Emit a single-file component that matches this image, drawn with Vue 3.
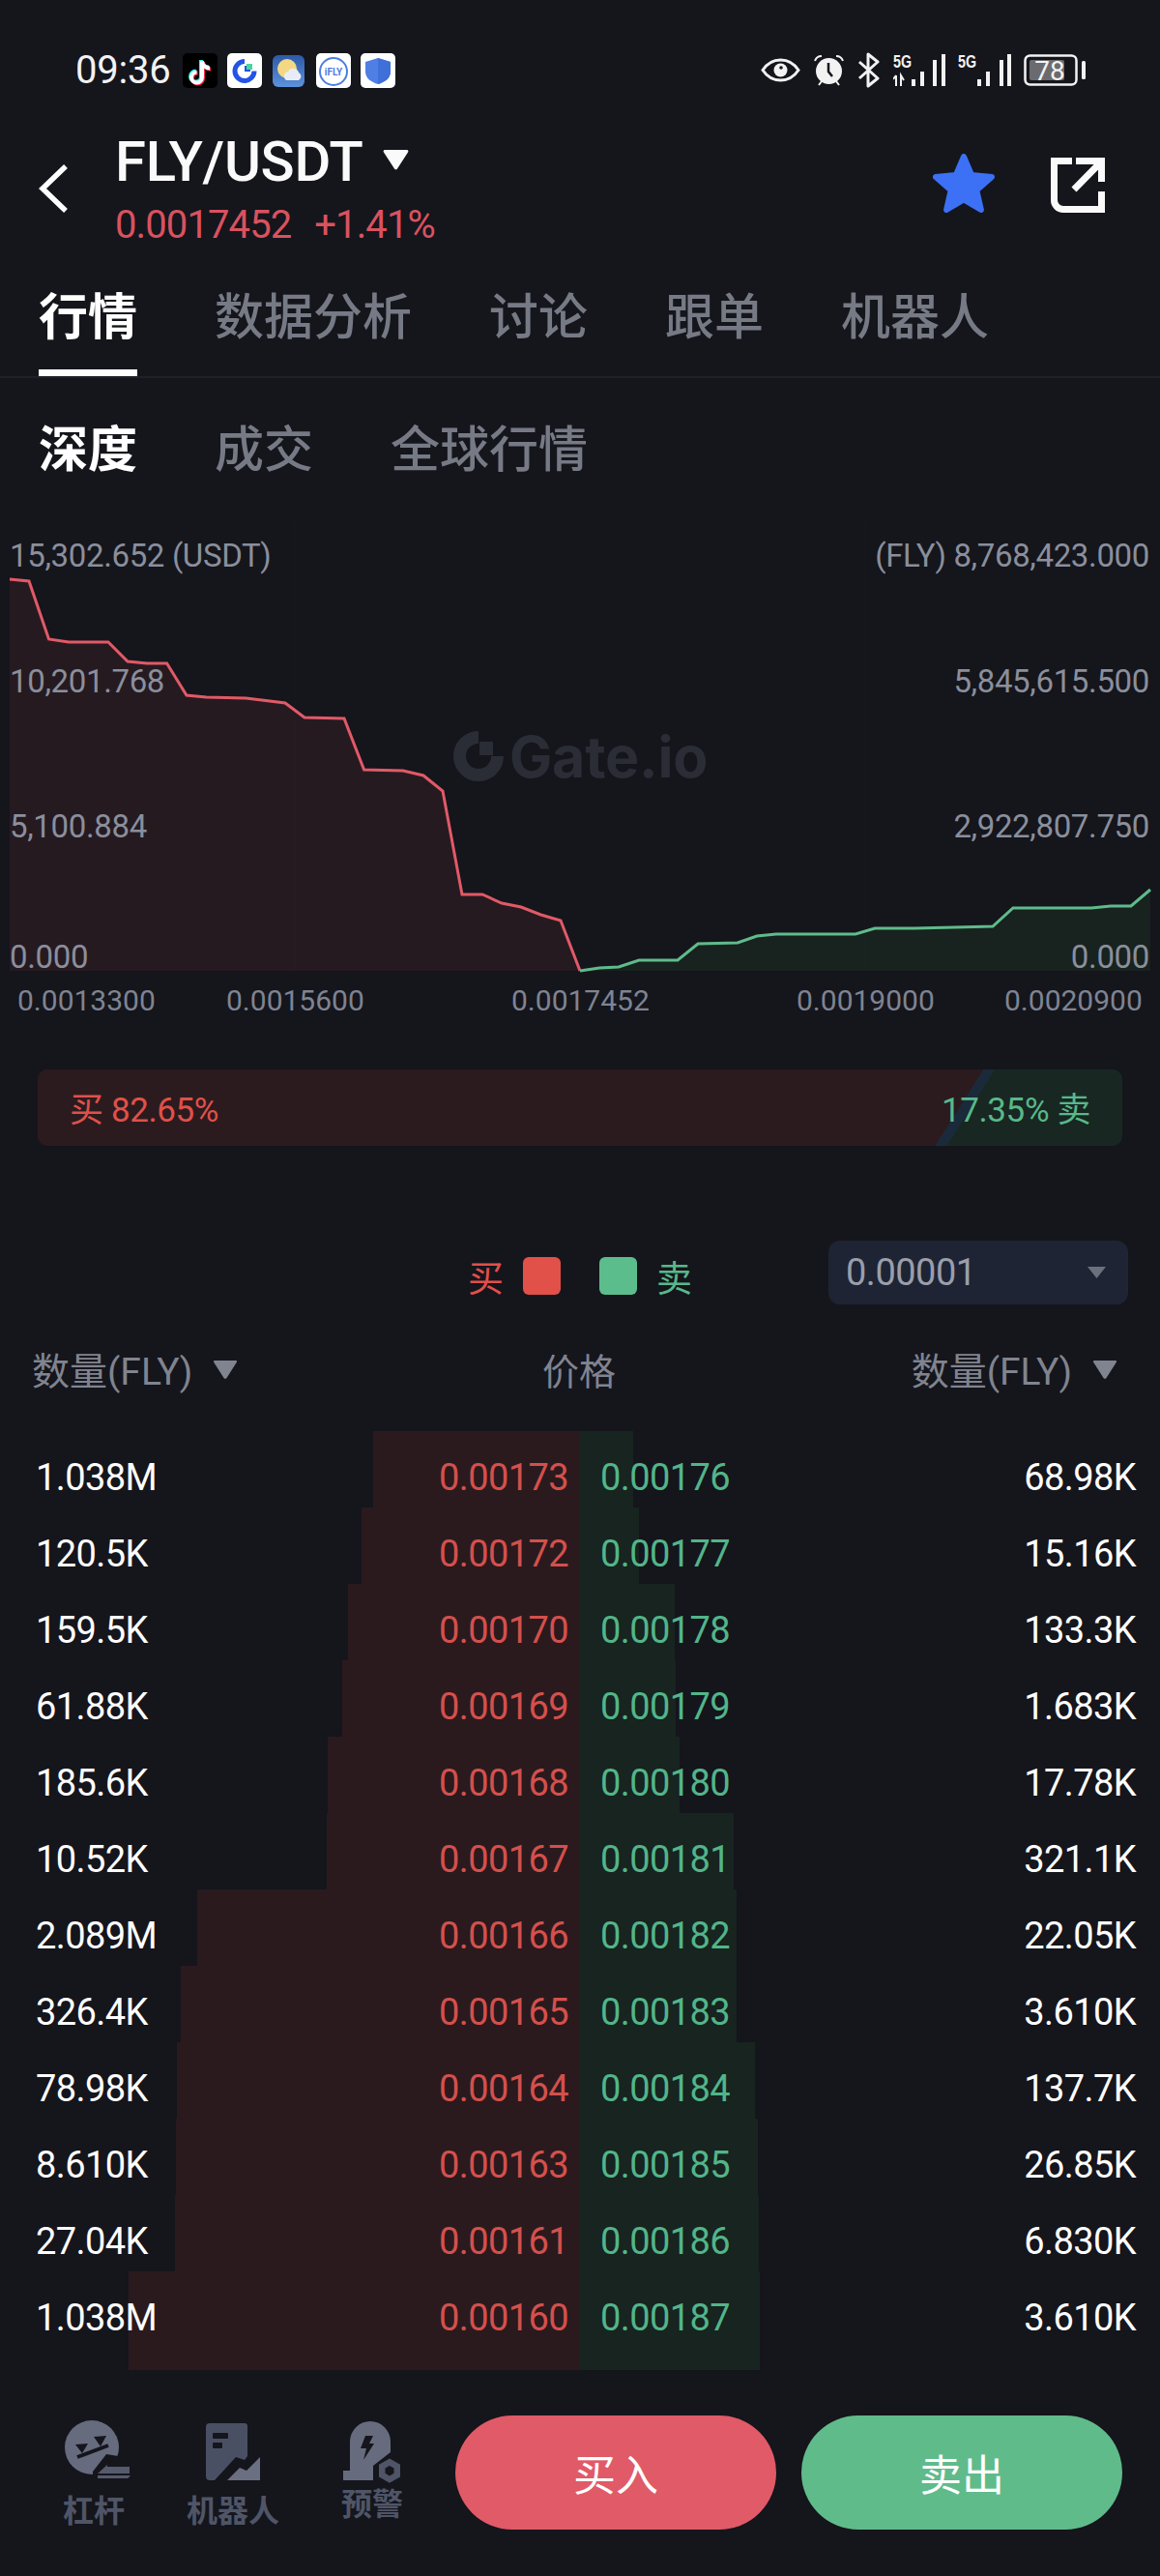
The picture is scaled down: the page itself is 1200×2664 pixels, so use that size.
<script setup>
const mainTabs = ["行情", "数据分析", "讨论", "跟单", "机器人"];
const subTabs = ["深度", "成交", "全球行情"];

// chart line points, in page pixels
const buyLine = [
  [10, 599], [30, 601], [50.5, 661], [71, 664], [112, 664], [132, 684], [152, 686],
  [172.6, 686], [193, 719], [213.5, 721], [254.5, 722], [295, 727], [315, 742],
  [356, 743], [376.6, 796], [417, 797], [438, 802], [458, 818], [478, 925], [499, 925],
  [519, 934], [539, 938], [559.5, 946], [580, 952], [600, 1004],
];
const sellLine = [
  [600, 1004], [620, 1001], [640, 1000], [661, 993], [701, 993], [722, 976], [763, 975],
  [783, 968], [803, 966], [885, 966], [905, 960], [946, 960], [1027, 958], [1048, 939],
  [1129, 939], [1149, 937], [1170, 937], [1190, 920],
];
const toPoints = (line) => line.map((p) => p.join(",")).join(" ");
const buyPoints = toPoints(buyLine);
const sellPoints = toPoints(sellLine);
const buyArea = `10,1004 ${buyPoints}`;
const sellArea = `${sellPoints} 1190,1004`;

const leftLabels = [
  { text: "15,302.652 (USDT)", top: 16 },
  { text: "10,201.768", top: 146 },
  { text: "5,100.884", top: 296 },
  { text: "0.000", top: 431 },
];
const rightLabels = [
  { text: "(FLY) 8,768,423.000", top: 16 },
  { text: "5,845,615.500", top: 146 },
  { text: "2,922,807.750", top: 296 },
  { text: "0.000", top: 431 },
];
const ticks = [
  { text: "0.0013300", left: 18 },
  { text: "0.0015600", left: 234 },
  { text: "0.0017452", left: 529 },
  { text: "0.0019000", left: 824 },
  { text: "0.0020900", left: 1039 },
];

const rows = [
  { buyQty: "1.038M", buy: "0.00173", sell: "0.00176", sellQty: "68.98K", buyW: 214, sellW: 55 },
  { buyQty: "120.5K", buy: "0.00172", sell: "0.00177", sellQty: "15.16K", buyW: 226, sellW: 61 },
  { buyQty: "159.5K", buy: "0.00170", sell: "0.00178", sellQty: "133.3K", buyW: 240, sellW: 98 },
  { buyQty: "61.88K", buy: "0.00169", sell: "0.00179", sellQty: "1.683K", buyW: 246, sellW: 99 },
  { buyQty: "185.6K", buy: "0.00168", sell: "0.00180", sellQty: "17.78K", buyW: 261, sellW: 103 },
  { buyQty: "10.52K", buy: "0.00167", sell: "0.00181", sellQty: "321.1K", buyW: 262, sellW: 159 },
  { buyQty: "2.089M", buy: "0.00166", sell: "0.00182", sellQty: "22.05K", buyW: 396, sellW: 162 },
  { buyQty: "326.4K", buy: "0.00165", sell: "0.00183", sellQty: "3.610K", buyW: 413, sellW: 162 },
  { buyQty: "78.98K", buy: "0.00164", sell: "0.00184", sellQty: "137.7K", buyW: 417, sellW: 181 },
  { buyQty: "8.610K", buy: "0.00163", sell: "0.00185", sellQty: "26.85K", buyW: 418, sellW: 184 },
  { buyQty: "27.04K", buy: "0.00161", sell: "0.00186", sellQty: "6.830K", buyW: 419, sellW: 185 },
  { buyQty: "1.038M", buy: "0.00160", sell: "0.00187", sellQty: "3.610K", buyW: 467, sellW: 186 },
];
</script>

<template>
  <div class="page">
    <div class="status">
      <span class="time">09:36</span>
      <div class="apps">
        <svg class="app" viewBox="0 0 36 36">
          <rect width="36" height="36" rx="5" fill="#000" />
          <g fill="none" stroke-width="4">
            <path d="M19 7v17a5.5 5.5 0 1 1-5.5-5.5M19 7c0 4 3.5 7.500 8 7.500" stroke="#25f4ee" />
            <path d="M21 9v17a5.500 5.500 0 1 1-5.500-5.500M21 9c0 4 3.500 7.500 8 7.500" stroke="#fe2c55" />
            <path d="M20 8v17a5.500 5.500 0 1 1-5.500-5.500M20 8c0 4 3.500 7.500 8 7.500" stroke="#fff" />
          </g>
        </svg>
        <svg class="app" viewBox="0 0 36 36">
          <rect width="36" height="36" rx="5" fill="#fff" />
          <path d="M18 8.500a10 10 0 1 0 10 10" fill="none" stroke="#2354e6" stroke-width="5" />
          <rect x="18" y="13" width="6" height="6" fill="#2354e6" />
          <rect x="20" y="11" width="6" height="6" fill="#46d6a0" />
        </svg>
        <svg class="app" viewBox="0 0 36 36">
          <defs>
            <linearGradient id="sky" x1="0" y1="0" x2="0" y2="1">
              <stop offset="0" stop-color="#2c5aa8" />
              <stop offset="1" stop-color="#5d92dc" />
            </linearGradient>
          </defs>
          <rect x="1" y="2" width="33" height="33" rx="6" fill="url(#sky)" />
          <circle cx="16" cy="16" r="10" fill="#f3d783" />
          <path d="M15 28a5 5 0 0 1 2-9 6 6 0 0 1 11 1 4.500 4.500 0 0 1 0 8z" fill="#e8edf5" />
        </svg>
        <svg class="app" viewBox="0 0 36 36">
          <rect width="36" height="36" rx="5" fill="#fff" />
          <circle cx="18" cy="19" r="14" fill="none" stroke="#4c7de0" stroke-width="2" />
          <text x="18" y="22.500" text-anchor="middle" class="app-text">iFLY</text>
        </svg>
        <svg class="app" viewBox="0 0 36 36">
          <rect width="36" height="36" rx="5" fill="#fff" />
          <path d="M18 5l13 4v10c0 7-6 11-13 13C11 30 5 26 5 19V9z" fill="#4f7fe4" />
          <path d="M18 5l13 4v10c0 7-6 11-13 13z" fill="#3f6fd8" />
        </svg>
      </div>
      <div class="sys">
        <svg class="sys-eye" viewBox="0 0 41 25">
          <path d="M2 12.500C7 5 13 2 20.500 2S34 5 39 12.500C34 20 28 23 20.500 23S7 20 2 12.500z" fill="none" stroke="#f2f2f2" stroke-width="3" />
          <circle cx="20.500" cy="12.500" r="7" fill="#f2f2f2" />
          <circle cx="21" cy="10" r="1.800" fill="#15151c" />
        </svg>
        <svg class="sys-alarm" viewBox="0 0 33 33">
          <circle cx="16.500" cy="17.500" r="13.500" fill="#f2f2f2" />
          <path d="M16 9v9l4 5" fill="none" stroke="#15151c" stroke-width="2.500" />
          <path d="M2 7c1-3 4-5 7-5M31 7c-1-3-4-5-7-5M6 32l3-4M27 32l-3-4" fill="none" stroke="#f2f2f2" stroke-width="2" />
        </svg>
        <svg class="sys-bt" viewBox="0 0 24 37">
          <path d="M2 10l19 17-10 8V2l10 8L2 27" fill="none" stroke="#f2f2f2" stroke-width="3" stroke-linejoin="round" />
        </svg>
        <svg class="sys-signal" viewBox="0 -4 54 37">
          <text x="0" y="14" textLength="19" lengthAdjust="spacingAndGlyphs" class="net-text">5G</text>
          <path d="M3 33V22M0 26l3-4M8 33V22l3 5" fill="none" stroke="#f2f2f2" stroke-width="2" />
          <rect x="19" y="26" width="4" height="7" fill="#f2f2f2" />
          <rect x="28" y="18" width="4" height="15" fill="#f2f2f2" />
          <rect x="41" y="6" width="4" height="27" fill="#f2f2f2" />
          <rect x="50" y="0" width="4" height="33" fill="#f2f2f2" />
        </svg>
        <svg class="sys-signal2" viewBox="0 -4 55 37">
          <text x="0" y="14" textLength="19" lengthAdjust="spacingAndGlyphs" class="net-text">5G</text>
          <rect x="20" y="26" width="4" height="7" fill="#f2f2f2" />
          <rect x="29" y="18" width="4" height="15" fill="#f2f2f2" />
          <rect x="43" y="6" width="4" height="27" fill="#f2f2f2" />
          <rect x="51" y="0" width="4" height="33" fill="#f2f2f2" />
        </svg>
        <svg class="sys-batt" viewBox="0 0 64 33">
          <rect x="1.500" y="1.500" width="53" height="30" rx="5" fill="none" stroke="#f2f2f2" stroke-width="2.500" />
          <rect x="6" y="6" width="36" height="21" rx="2" fill="#6b6b6f" />
          <rect x="60" y="7" width="4" height="19" rx="1.500" fill="#f2f2f2" />
          <text x="27" y="27" text-anchor="middle" class="batt-text">78</text>
        </svg>
      </div>
    </div>

    <header class="head">
      <svg class="back" viewBox="0 0 34 54">
        <path d="M30 4L6 27l24 23" fill="none" stroke="#fff" stroke-width="5.500" />
      </svg>
      <div class="pair">
        <div class="pair-name">
          <span>FLY/USDT</span>
          <svg class="pair-caret" viewBox="0 0 27 22"><path d="M2 1h23a1.500 1.500 0 0 1 1 2.500L15 20.500a2 2 0 0 1-3 0L1 3.500A1.500 1.500 0 0 1 2 1z" fill="#fafafa" /></svg>
        </div>
        <div class="pair-price">
          <span>0.0017452</span>
          <span>+1.41%</span>
        </div>
      </div>
      <svg class="star" viewBox="0 0 64 61">
        <polygon points="32,3 40.200,22.100 61,24 45.300,37.700 49.900,58 32,47.400 14.100,58 18.700,37.700 3,24 23.800,22.100" fill="#3c70f5" stroke="#3c70f5" stroke-width="6" stroke-linejoin="round" />
      </svg>
      <svg class="share" viewBox="0 0 56 57">
        <path d="M22 3.500H3.500V44a9.500 9.500 0 0 0 9.500 9.500h39.500V35M26 3.500h26.500V25M24 33L52 4.500" fill="none" stroke="#fafafa" stroke-width="7" />
      </svg>
    </header>

    <nav class="tabs">
      <div v-for="(t, i) in mainTabs" :key="t" class="tab" :class="{ 'tab--on': i === 0 }">{{ t }}</div>
    </nav>
    <nav class="subtabs">
      <div v-for="(t, i) in subTabs" :key="t" class="subtab" :class="{ 'subtab--on': i === 0 }">{{ t }}</div>
    </nav>

    <section class="chart">
      <svg class="chart-svg" viewBox="0 540 1200 478">
        <polygon :points="buyArea" fill="#261a21" />
        <polygon :points="sellArea" fill="#18221f" />
        <path d="M305 540V1004M895 540V1004" stroke="#ffffff" stroke-opacity="0.02" stroke-width="1" />
        <polyline :points="buyPoints" fill="none" stroke="#e15a67" stroke-width="3" />
        <polyline :points="sellPoints" fill="none" stroke="#5fbb8b" stroke-width="3" />
      </svg>
      <div class="mark">
        <svg class="mark-icon" viewBox="0 0 52 52">
          <path d="M26 6.500A19.500 19.500 0 1 0 45.500 26" fill="none" stroke="#2a2d35" stroke-width="13" />
          <rect x="27" y="11" width="14" height="14" fill="#2a2d35" />
        </svg>
        <span class="mark-text">Gate.io</span>
      </div>
      <span v-for="l in leftLabels" :key="l.text" class="axis-y axis-y--left" :style="{ top: l.top + 'px' }">{{ l.text }}</span>
      <span v-for="l in rightLabels" :key="l.text" class="axis-y axis-y--right" :style="{ top: l.top + 'px' }">{{ l.text }}</span>
    </section>
    <div class="ticks">
      <span v-for="t in ticks" :key="t.text" class="tick" :style="{ left: t.left + 'px' }">{{ t.text }}</span>
    </div>

    <div class="ratio">
      <span class="ratio-buy">买 82.65%</span>
      <span class="ratio-sell">17.35% 卖</span>
    </div>

    <div class="filters">
      <div class="legend">
        <span class="legend-buy">买</span>
        <i class="swatch swatch--buy"></i>
        <i class="swatch swatch--sell"></i>
        <span class="legend-sell">卖</span>
      </div>
      <div class="select">
        <span>0.00001</span>
        <svg class="select-caret" viewBox="0 0 19 12"><path d="M0 0h19L9.500 12z" fill="#6c707c" /></svg>
      </div>
    </div>

    <div class="thead">
      <div class="th">
        数量(FLY)
        <svg class="th-caret" viewBox="0 0 24 19"><path d="M1 0h22a1 1 0 0 1 1 1.500L13.500 18a2 2 0 0 1-3 0L0 1.500A1 1 0 0 1 1 0z" fill="#80848f" /></svg>
      </div>
      <div class="th th--mid">价格</div>
      <div class="th th--end">
        数量(FLY)
        <svg class="th-caret" viewBox="0 0 24 19"><path d="M1 0h22a1 1 0 0 1 1 1.500L13.500 18a2 2 0 0 1-3 0L0 1.500A1 1 0 0 1 1 0z" fill="#80848f" /></svg>
      </div>
    </div>

    <div class="book">
      <div v-for="r in rows" :key="r.buy" class="row">
        <div class="side side--buy">
          <i class="depth depth--buy" :style="{ width: r.buyW + 'px' }"></i>
          <span class="qty">{{ r.buyQty }}</span>
          <span class="price price--buy">{{ r.buy }}</span>
        </div>
        <div class="side side--sell">
          <i class="depth depth--sell" :style="{ width: r.sellW + 'px' }"></i>
          <span class="price price--sell">{{ r.sell }}</span>
          <span class="qty">{{ r.sellQty }}</span>
        </div>
      </div>
    </div>

    <footer class="foot">
      <div class="tools">
        <div class="tool">
          <svg class="tool-icon" viewBox="0 0 70 60">
            <circle cx="28" cy="28" r="28" fill="#666b7e" />
            <path d="M29 53L43 35l12 2 15 6v17H29z" fill="#15151c" />
            <path d="M11 25l13-1-6 10zM30 17l13-1-6 11z" fill="#15151c" />
            <path d="M13 38l32-12" stroke="#15151c" stroke-width="4" />
            <path d="M34 55l10-9v2h23v7z" fill="#555a6c" />
            <path d="M34 58h34L57 70V65H34z" fill="#555a6c" transform="translate(0 -1)" />
          </svg>
          <span class="tool-label">杠杆</span>
        </div>
        <div class="tool">
          <svg class="tool-icon tool-icon--robot" viewBox="0 0 56 60">
            <path d="M4 0h36a3 3 0 0 1 3 3v31l-3 4-9-3L9 59H4a4 4 0 0 1-4-4V4a4 4 0 0 1 4-4z" fill="#4a5064" />
            <rect x="7" y="10" width="16" height="6" rx="1" fill="#15151c" />
            <rect x="7" y="20" width="10" height="6" rx="1" fill="#15151c" />
            <path d="M22 59l13-13 7 3 14-14v24z" fill="#6a6f82" />
          </svg>
          <span class="tool-label">机器人</span>
        </div>
        <div class="tool tool--alert">
          <svg class="tool-icon tool-icon--alert" viewBox="0 0 60 64">
            <path d="M0 61V51h7V21a21 21 0 0 1 42 0v11L31 46v15z" fill="#666b7e" />
            <path d="M23 15h8l-4 8h5L21 40l3-12h-6z" fill="#15151c" />
            <path d="M48 38.500l11 6.300v12.600L48 63.700l-11-6.300V44.800zM48 46l-4.500 2.600v5.200L48 56.400l4.500-2.600v-5.200z" fill="#4f5466" fill-rule="evenodd" />
          </svg>
          <span class="tool-label">预警</span>
        </div>
      </div>
      <div class="actions">
        <div class="btn btn--buy">买入</div>
        <div class="btn btn--sell">卖出</div>
      </div>
    </footer>
  </div>
</template>

<style scoped>
.page {
  width: 1200px;
  height: 2664px;
  overflow: hidden;
  background: #15151c;
  color: #fff;
  font-family: Roboto, "Noto Sans CJK SC", sans-serif;
}

.status {
  display: flex;
  align-items: center;
  height: 37px;
  padding: 54px 0 19px 78px;
}
.time {
  width: 98px;
  margin-right: 13px;
  font-size: 40px;
  line-height: 37px;
  letter-spacing: -0.2px;
  color: #f2f2f2;
}
.apps {
  display: flex;
  gap: 10px;
}
.app {
  width: 36px;
  height: 36px;
}
.app-text {
  font: 700 10px Roboto, sans-serif;
  fill: #4c7de0;
}
.sys {
  display: flex;
  align-items: center;
  gap: 13px;
  margin-left: auto;
  margin-right: 77px;
}
.sys-eye { width: 41px; height: 25px; }
.sys-alarm { width: 33px; height: 33px; }
.sys-bt { width: 24px; height: 37px; }
.sys-signal { width: 54px; height: 37px; margin-top: -4px; }
.sys-signal2 { width: 55px; height: 37px; margin-top: -4px; }
.sys-batt { width: 64px; height: 33px; }
.net-text {
  font: 700 18px "Liberation Sans", sans-serif;
  fill: #f2f2f2;
}
.batt-text {
  font: 400 28px Roboto, sans-serif;
  fill: #f2f2f2;
}

.head {
  display: flex;
  align-items: center;
  height: 120px;
  padding: 25px 57px 25px 38px;
}
.back {
  width: 34px;
  height: 54px;
  flex: none;
  margin-right: 47px;
}
.pair {
  flex: 1;
}
.pair-name {
  display: flex;
  align-items: center;
  height: 64px;
  font-size: 58px;
  font-weight: 500;
  letter-spacing: -0.3px;
  color: #fafafa;
}
.pair-caret {
  width: 27px;
  height: 22px;
  margin-left: 20px;
  margin-top: -4px;
}
.pair-price {
  display: flex;
  gap: 24px;
  margin-top: 11px;
  font-size: 40px;
  line-height: 46px;
  letter-spacing: -0.9px;
  color: #d9525f;
}
.star {
  width: 64px;
  height: 61px;
  margin-right: 58px;
  margin-top: -11px;
}
.share {
  width: 56px;
  height: 57px;
  margin-top: -8px;
}

.tabs {
  display: flex;
  gap: 80px;
  height: 98px;
  padding: 11px 40px 0;
  border-bottom: 2px solid #1e2127;
}
.tab {
  height: 88px;
  padding-top: 3px;
  border-bottom: 7px solid transparent;
  font-size: 51px;
  line-height: 70px;
  font-weight: 500;
  color: #767a85;
}
.tab--on {
  color: #fff;
  font-weight: 700;
  border-bottom-color: #fff;
}

.subtabs {
  display: flex;
  gap: 80px;
  padding: 40px 40px 0;
  margin-bottom: 39px;
}
.subtab {
  font-size: 51px;
  line-height: 70px;
  font-weight: 500;
  color: #767a85;
}
.subtab--on {
  color: #fff;
  font-weight: 700;
}

.chart {
  position: relative;
  height: 478px;
}
.chart-svg {
  display: block;
  width: 1200px;
  height: 478px;
}
.mark {
  position: absolute;
  left: 469px;
  top: 216px;
  display: flex;
  align-items: center;
  gap: 6px;
  height: 52px;
}
.mark-icon {
  width: 52px;
  height: 52px;
}
.mark-text {
  font: 700 59px Inter, sans-serif;
  letter-spacing: -0.2px;
  color: #2a2d35;
}
.axis-y {
  position: absolute;
  font-size: 33px;
  line-height: 38px;
  letter-spacing: -0.35px;
  white-space: nowrap;
  color: #8a8f9c;
}
.axis-y--left { left: 10px; }
.axis-y--right { right: 11px; }

.ticks {
  position: relative;
  height: 34px;
}
.tick {
  position: absolute;
  top: 0;
  font-size: 30px;
  line-height: 34px;
  color: #7e8492;
}

.ratio {
  display: flex;
  align-items: center;
  justify-content: space-between;
  height: 79px;
  margin: 54px 39px 0;
  padding: 0 33px 3px;
  box-sizing: border-box;
  border-radius: 10px;
  font-size: 35px;
  letter-spacing: -0.4px;
  background: linear-gradient(122.3deg, #2b1b1e 827px, #1b2a3a 827px, #1b2a3a 837px, #182722 837px);
}
.ratio-buy { color: #e0504a; }
.ratio-sell { color: #58b88a; }

.filters {
  display: flex;
  align-items: center;
  gap: 140px;
  height: 66px;
  margin-top: 98px;
  padding-left: 484px;
}
.legend {
  display: flex;
  align-items: center;
  width: 233px;
  margin-top: 7px;
  font-size: 37px;
}
.legend-buy { color: #e0504a; margin-right: 20px; }
.legend-sell { color: #58b88a; margin-left: 20px; }
.swatch {
  width: 39px;
  height: 39px;
  border-radius: 6px;
}
.swatch--buy { background: #e2504a; margin-right: 40px; }
.swatch--sell { background: #5bbd8c; }
.select {
  display: flex;
  align-items: center;
  justify-content: space-between;
  width: 310px;
  height: 66px;
  box-sizing: border-box;
  padding: 0 23px 0 18px;
  border-radius: 12px;
  background: #1e2433;
  font-size: 38px;
  letter-spacing: -0.5px;
  color: #9a9eab;
}
.select-caret {
  width: 19px;
  height: 12px;
}

.thead {
  display: grid;
  grid-template-columns: 1fr auto 1fr;
  align-items: center;
  height: 44px;
  margin-top: 38px;
  padding: 0 45px 0 33px;
  font-size: 39px;
  color: #80848f;
}
.th {
  display: flex;
  align-items: center;
  gap: 22px;
}
.th--mid {
  position: relative;
  left: 5px;
  font-size: 38px;
}
.th--end {
  justify-content: flex-end;
}
.th-caret {
  width: 24px;
  height: 19px;
  margin-top: 3px;
}

.book {
  margin-top: 49px;
}
.row {
  display: grid;
  grid-template-columns: 600px 600px;
  font-size: 38px;
  line-height: 42px;
  letter-spacing: -0.6px;
}
.side {
  position: relative;
  display: flex;
  justify-content: space-between;
  padding: 27px 0 10px;
}
.row:last-child .side {
  padding-bottom: 33px;
}
.side--buy { padding-left: 37px; padding-right: 12px; }
.side--sell { padding-left: 21px; padding-right: 25px; }
.depth {
  position: absolute;
  top: 0;
  bottom: 0;
}
.depth--buy { right: 0; background: #2a1a1e; }
.depth--sell { left: 0; background: #17241f; }
.qty, .price {
  position: relative;
}
.qty { color: #fff; }
.price--buy { color: #d4504c; }
.price--sell { color: #52b58a; }

.foot {
  display: flex;
  padding: 47px 39px 0 25px;
}
.tools {
  display: flex;
  width: 432px;
  margin-right: 14px;
}
.tool {
  display: flex;
  flex-direction: column;
  align-items: center;
  width: 144px;
  padding-top: 5px;
}
.tool-icon {
  width: 70px;
  height: 60px;
  margin-left: 10px;
}
.tool-icon--robot {
  width: 56px;
  margin-left: 0;
  margin-top: 3px;
  margin-bottom: -3px;
}
.tool-icon--alert {
  width: 60px;
  height: 64px;
  margin-left: 0;
  margin-top: 1px;
}
.tool-label {
  margin-top: 14px;
  font-size: 32px;
  line-height: 40px;
  font-weight: 700;
  color: #4f5567;
}
.tool--alert .tool-label {
  margin-top: 2px;
}
.actions {
  display: flex;
  gap: 26px;
}
.btn {
  display: flex;
  align-items: center;
  justify-content: center;
  width: 332px;
  height: 118px;
  border-radius: 59px;
  font-size: 44px;
  color: #fff;
}
.btn--buy { background: #e15a67; }
.btn--sell { background: #60bb8b; }
</style>

<style>
body {
  background: #15151c;
}
</style>
